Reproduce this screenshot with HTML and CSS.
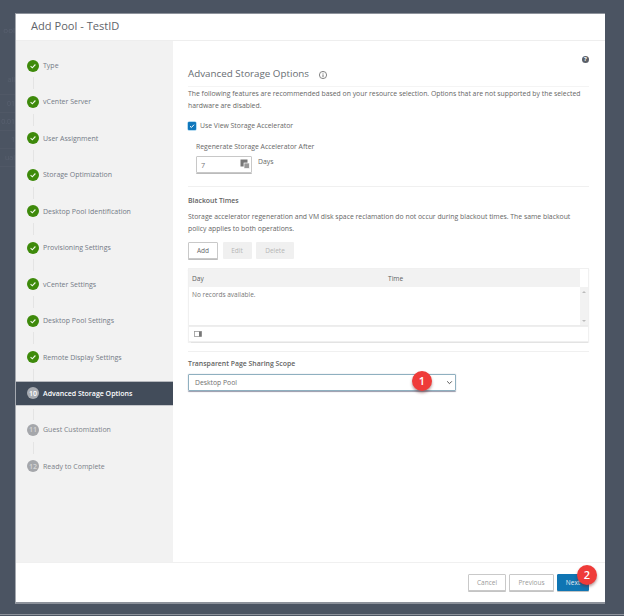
FILE: index.html
```html
<!DOCTYPE html>
<html lang="en">
<head>
<meta charset="utf-8">
<title>Add Pool - TestID</title>
<link rel="stylesheet" href="styles.css">
</head>
<body>
<div class="backdrop">
  <div class="ghost">
    <div class="ghost-title">ool</div>
    <div class="ghost-row">all</div>
    <div class="ghost-row tight">01</div>
    <div class="ghost-row tight">0.01</div>
    <div class="ghost-row tight">1</div>
    <div class="ghost-row tight">ual</div>
  </div>
  <div class="modal">
    <header class="modal-head">Add Pool - TestID</header>
    <div class="modal-body">
      <nav class="steps">
        <div class="step done"><span class="dot"><svg viewBox="0 0 12 12"><path d="M3.6 6.2 5.3 7.8 8.4 4.5"/></svg></span><span>Type</span></div>
        <div class="step done"><span class="dot"><svg viewBox="0 0 12 12"><path d="M3.6 6.2 5.3 7.8 8.4 4.5"/></svg></span><span>vCenter Server</span></div>
        <div class="step done"><span class="dot"><svg viewBox="0 0 12 12"><path d="M3.6 6.2 5.3 7.8 8.4 4.5"/></svg></span><span>User Assignment</span></div>
        <div class="step done"><span class="dot"><svg viewBox="0 0 12 12"><path d="M3.6 6.2 5.3 7.8 8.4 4.5"/></svg></span><span>Storage Optimization</span></div>
        <div class="step done"><span class="dot"><svg viewBox="0 0 12 12"><path d="M3.6 6.2 5.3 7.8 8.4 4.5"/></svg></span><span>Desktop Pool Identification</span></div>
        <div class="step done"><span class="dot"><svg viewBox="0 0 12 12"><path d="M3.6 6.2 5.3 7.8 8.4 4.5"/></svg></span><span>Provisioning Settings</span></div>
        <div class="step done"><span class="dot"><svg viewBox="0 0 12 12"><path d="M3.6 6.2 5.3 7.8 8.4 4.5"/></svg></span><span>vCenter Settings</span></div>
        <div class="step done"><span class="dot"><svg viewBox="0 0 12 12"><path d="M3.6 6.2 5.3 7.8 8.4 4.5"/></svg></span><span>Desktop Pool Settings</span></div>
        <div class="step done"><span class="dot"><svg viewBox="0 0 12 12"><path d="M3.6 6.2 5.3 7.8 8.4 4.5"/></svg></span><span>Remote Display Settings</span></div>
        <div class="step active"><span class="dot">10</span><span>Advanced Storage Options</span></div>
        <div class="step todo"><span class="dot">11</span><span>Guest Customization</span></div>
        <div class="step todo last"><span class="dot">12</span><span>Ready to Complete</span></div>
      </nav>
      <main class="content">
        <div class="help-row"><span class="help">?</span></div>
        <h1 class="page-title">Advanced Storage Options <svg class="info" viewBox="0 0 10 10"><circle cx="5" cy="5" r="3.6"/><path d="M5 4.4V7.2M5 2.8V3.6"/></svg></h1>
        <p class="text intro">The following features are recommended based on your resource selection. Options that are not supported by the selected hardware are disabled.</p>
        <label class="check-row"><span class="checkbox"><svg viewBox="0 0 8 8"><path d="M2 4.2 3.4 5.5 6 2.7"/></svg></span>Use View Storage Accelerator</label>
        <div class="regen">
          <div class="regen-label">Regenerate Storage Accelerator After</div>
          <div class="regen-row">
            <div class="num-input"><span>7</span><svg viewBox="0 0 10 10"><rect x="0.5" y="0.5" width="7" height="7" fill="#777"/><rect x="4" y="4" width="5.5" height="5.5" fill="#999" stroke="#fff" stroke-width=".7"/></svg></div>
            <span class="days">Days</span>
          </div>
        </div>
        <hr class="rule">
        <h2 class="section blackout">Blackout Times</h2>
        <p class="text">Storage accelerator regeneration and VM disk space reclamation do not occur during blackout times. The same blackout policy applies to both operations.</p>
        <div class="btn-row">
          <button class="btn add">Add</button>
          <button class="btn edit">Edit</button>
          <button class="btn delete">Delete</button>
        </div>
        <div class="grid">
          <div class="grid-head"><div class="cols"><span class="col-day">Day</span><span>Time</span></div><div class="head-gap"></div></div>
          <div class="grid-body">
            <div class="empty">No records available.</div>
            <div class="scroll"><span class="up"></span><span class="down"></span></div>
          </div>
          <div class="grid-foot"><svg viewBox="0 0 8 6"><rect x="0.5" y="0.5" width="7" height="5" fill="#fff" stroke="#999" stroke-width=".8"/><rect x="5" y="0.5" width="2.5" height="5" fill="#777"/></svg></div>
        </div>
        <hr class="rule second">
        <h2 class="section tps">Transparent Page Sharing Scope</h2>
        <div class="select-wrap">
          <div class="select"><span>Desktop Pool</span><svg viewBox="0 0 8 6"><path d="M1.2 1.6 4 4.4 6.8 1.6"/></svg></div>
          <span class="badge b1">1</span>
        </div>
      </main>
    </div>
    <footer class="modal-foot">
      <button class="foot-btn cancel">Cancel</button>
      <button class="foot-btn prev">Previous</button>
      <div class="next-wrap">
        <button class="foot-btn next">Next</button>
        <span class="badge b2">2</span>
      </div>
    </footer>
  </div>
</div>
</body>
</html>
```
FILE: styles.css
```css
* { box-sizing: border-box; }
html, body { margin: 0; height: 100%; }
body {
  width: 624px;
  height: 616px;
  overflow: hidden;
  background: #4b5462;
  font-family: "Open Sans", "Noto Sans", sans-serif;
  color: #565656;
}
.backdrop {
  position: relative;
  height: 614px;
  padding: 13px 19px 0 15px;
  background: #4b5462;
  box-shadow: 0 1px 0 #8d929b;
  filter: blur(0.6px);
}
.ghost {
  position: absolute;
  left: 0;
  top: 22px;
  width: 15px;
  color: #596170;
  font-size: 7px;
  text-align: right;
}
.ghost-title { font-size: 8px; line-height: 16px; }
.ghost-row { margin-top: 36px; line-height: 12px; border-bottom: 1px solid #505866; padding-bottom: 8px; }
.ghost-row.tight { margin-top: 0; padding-top: 3px; padding-bottom: 2px; }
.modal {
  position: relative;
  width: 590px;
  height: 591px;
  background: #fff;
  border-left: 1px solid #a5a9b0;
  border-bottom: 2px solid #8d929b;
  border-top: 1px solid #8d929b;
  display: flex;
  flex-direction: column;
}
.modal-head {
  height: 27px;
  flex: none;
  padding-left: 15px;
  padding-top: 3px;
  font-size: 11.1px;
  line-height: 18px;
  color: #5f646a;
  border-bottom: 1px solid #eeeeee;
}
.modal-body { flex: 1; display: flex; min-height: 0; }
.steps {
  width: 157px;
  flex: none;
  background: #f2f2f2;
  padding-top: 6.3px;
  display: flex;
  flex-direction: column;
}
.step {
  height: 36.45px;
  flex: none;
  display: flex;
  align-items: center;
  padding-left: 11px;
  gap: 4px;
  font-size: 7px;
  color: #727a86;
  position: relative;
}
.step::after {
  content: "";
  position: absolute;
  left: 16.5px;
  top: 30px;
  height: 12px;
  width: 1.5px;
  background: #e4e4e4;
}
.step.last::after { display: none; }
.dot {
  width: 12px;
  height: 12px;
  border-radius: 50%;
  flex: none;
  display: flex;
  align-items: center;
  justify-content: center;
  font-size: 7px;
  color: #fff;
  font-weight: 600;
}
.dot svg { width: 12px; height: 12px; }
.dot path { fill: none; stroke: #f2f8ee; stroke-width: 1.1; }
.done .dot { background: #3e8a0b; }
.todo .dot { background: #a5a7ab; color: #d6d6d6; }
.todo { color: #7c8189; }
.active {
  background: #424c5a;
  color: #fff;
  border-top: 1px solid #b5b8bd;
  border-bottom: 1px solid #c6c8cc;
  height: 25px;
  margin: 5.7px 0;
  font-weight: 600;
}
.active .dot { background: #a8acb2; }
.active::after { top: 27px; height: 11px; }
.content {
  flex: 1;
  min-width: 0;
  padding: 0 16px 0 15px;
}
.help-row { display: flex; justify-content: flex-end; height: 12px; padding-top: 15px; margin-bottom: 9px; }
.help {
  width: 7px; height: 7px; border-radius: 50%;
  background: #5a5f68; color: #fff;
  font-size: 6px; line-height: 7px; text-align: center;
  font-weight: 700;
}
.page-title {
  margin: 7px 0 0;
  padding-top: 1px;
  height: 22px;
  font-size: 9.8px;
  line-height: 16px;
  font-weight: 400;
  color: #686d73;
  border-bottom: 1px solid #f4f4f4;
  display: flex;
  align-items: flex-start;
  gap: 9px;
}
.info { width: 10px; height: 10px; margin-top: 4px; }
.info circle { fill: none; stroke: #777; stroke-width: .9; }
.info path { fill: none; stroke: #777; stroke-width: 1; }
.text {
  margin: 0;
  font-size: 6.85px;
  line-height: 12px;
  color: #666;
}
.intro { margin-top: 1px; }
.check-row {
  display: flex;
  align-items: center;
  gap: 4px;
  margin-top: 8px;
  font-size: 6.85px;
  line-height: 12px;
  color: #686868;
}
.checkbox {
  width: 8px; height: 8px;
  background: #0f77bc;
  border-radius: 1px;
  box-shadow: 0 0 0 .5px #6cb7e4;
  display: flex;
}
.checkbox svg { width: 8px; height: 8px; }
.checkbox path { fill: none; stroke: #fff; stroke-width: 1; }
.regen { padding-left: 8px; margin-top: 9px; }
.regen-label { font-size: 6.85px; line-height: 12px; color: #686868; }
.regen-row { display: flex; gap: 6px; margin-top: 3px; }
.num-input {
  width: 56px; height: 17px;
  border: 1px solid #c8c8c8;
  border-radius: 1px;
  box-shadow: 0 1px 0 #bbb;
  padding: 0 1px 0 4px;
  display: flex;
  align-items: center;
  justify-content: space-between;
  font-size: 7.2px;
  color: #777;
}
.num-input svg { width: 10px; height: 10px; margin-top: -2px; }
.days { font-size: 6.85px; line-height: 12px; color: #686868; }
.rule { border: 0; height: 1px; background: #f0f0f0; margin: 13px 0 0; }
.section {
  margin: 8px 0 0;
  font-size: 6.9px;
  line-height: 12px;
  font-weight: 600;
  color: #636363;
}
.blackout { margin-bottom: 4px; }
.btn-row { display: flex; gap: 4.5px; margin-top: 7px; }
.btn {
  height: 17px;
  padding: 0;
  font: 400 6.5px "Open Sans", sans-serif;
  border-radius: 1px;
  border: 0;
  background: #f0f0f0;
  color: #b5b5b5;
}
.add { width: 30px; background: #fff; border: 1px solid #c9c9c9; box-shadow: 0 1px 0 #bdbdbd; color: #666; }
.edit { width: 29px; }
.delete { width: 38px; }
.grid {
  margin-top: 9px;
  height: 74px;
  border: 1px solid #f0f0f0;
  box-shadow: 0 .5px 1px #e3e3e3;
  display: flex;
  flex-direction: column;
}
.grid-head { height: 18px; display: flex; flex: none; }
.cols { flex: 1; background: #f2f2f2; display: flex; align-items: center; padding-left: 3px; font-size: 6.6px; color: #5f5f5f; }
.col-day { width: 196px; }
.head-gap { width: 8px; }
.grid-body { height: 39px; flex: none; display: flex; border-bottom: 1px solid #ececec; box-shadow: 0 1px 0 #eee; }
.empty { flex: 1; font-size: 6.5px; color: #777; padding: 2px 0 0 3px; line-height: 12px; }
.scroll { width: 8px; background: #f2f2f2; display: flex; flex-direction: column; justify-content: space-between; align-items: center; padding: 4px 0 3px; }
.up { border: 2px solid transparent; border-top: 0; border-bottom: 2px solid #bbb; }
.down { border: 2px solid transparent; border-bottom: 0; border-top: 2px solid #bbb; }
.grid-foot { flex: 1; display: flex; align-items: center; padding-left: 5px; }
.grid-foot svg { width: 8px; height: 6px; }
.second { margin-top: 9px; }
.tps { margin-top: 6px; }
.select-wrap { position: relative; width: 268px; margin-top: 4px; }
.select {
  height: 17px;
  border: 1px solid #8fb0c0;
  border-radius: 1px;
  box-shadow: 0 .5px 1px #99a;
  display: flex;
  align-items: center;
  justify-content: space-between;
  padding: 0 2px 0 6px;
  font-size: 6.8px;
  color: #707070;
}
.select svg { width: 7px; height: 5px; }
.select path { fill: none; stroke: #555; stroke-width: 1.2; }
.badge {
  position: absolute;
  width: 20px; height: 20px;
  border-radius: 50%;
  background: #ef3b39;
  color: #fff;
  font-size: 11px;
  font-weight: 600;
  line-height: 20px;
  text-align: center;
  box-shadow: 0 2px 3px rgba(90,30,30,.45);
}
.b1 { left: 224px; top: -3px; }
.b2 { left: 20px; top: -9px; }
.modal-foot {
  height: 40px;
  flex: none;
  border-top: 1px solid #f0f0f0;
  display: flex;
  justify-content: flex-end;
  align-items: flex-start;
  gap: 3px;
  padding: 11px 16px 0 0;
}
.foot-btn {
  height: 17px;
  padding: 0;
  font: 400 6.5px "Open Sans", sans-serif;
  background: #fff;
  border: 1px solid #c9c9c9;
  box-shadow: 0 1px 0 #c4c4c4;
  color: #9a9a9a;
  border-radius: 1px;
}
.cancel { width: 38px; }
.prev { width: 45px; }
.next-wrap { position: relative; }
.next { width: 32px; background: #0f75b3; border-color: #0f75b3; color: #e7eef4; display: block; }
```
